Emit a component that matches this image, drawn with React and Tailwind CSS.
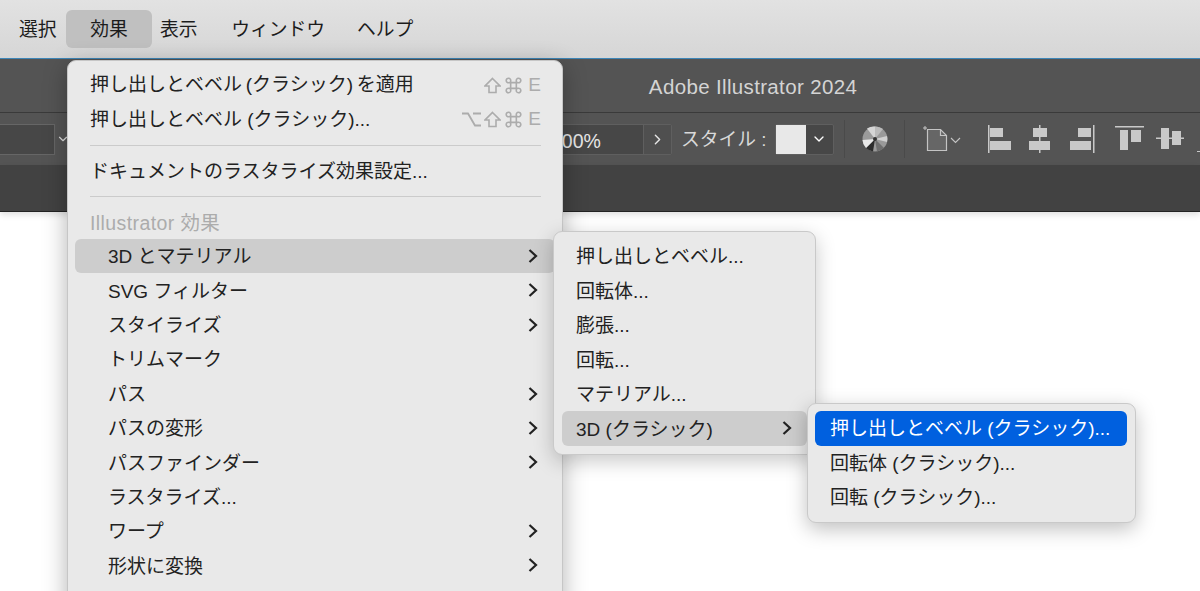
import { ChevronDown, ChevronRight } from "lucide-react";

const font = "font-['Liberation_Sans','Noto_Sans_CJK_JP',sans-serif]";

function Arrow({ className = "" }) {
  return (
    <svg width="10" height="16" viewBox="0 0 10 16" fill="none" className={className}>
      <path d="M1.5 2 L8 8 L1.5 14" stroke="#222" strokeWidth="2.2" />
    </svg>
  );
}

function ShiftKey() {
  return (
    <svg width="17" height="17" viewBox="0 0 17 17" fill="none" stroke="#acacac" strokeWidth="1.6">
      <path d="M8.5 1.5 L16 9 H12 V15.5 H5 V9 H1 Z" />
    </svg>
  );
}

function CmdKey() {
  return (
    <svg width="17" height="17" viewBox="0 0 15 15" fill="none" stroke="#acacac" strokeWidth="1.4">
      <path d="M5 5 H10 V10 H5 Z M5 5 V3.5 A2 2 0 1 0 3.5 5 H5 M10 5 V3.5 A2 2 0 1 1 11.5 5 H10 M5 10 V11.5 A2 2 0 1 1 3.5 10 H5 M10 10 V11.5 A2 2 0 1 0 11.5 10 H10" />
    </svg>
  );
}

function OptKey() {
  return (
    <svg width="19" height="17" viewBox="0 0 19 17" fill="none" stroke="#acacac" strokeWidth="1.8">
      <path d="M0 2.5 H6 L13 14.5 H19 M11 2.5 H19" />
    </svg>
  );
}

function Shortcut({ option }) {
  return (
    <div className="ml-auto mr-[14px] flex items-center text-[#acacac]">
      {option && <OptKey />}
      <span className={option ? "ml-[3px]" : ""}>
        <ShiftKey />
      </span>
      <span className="ml-[4px]">
        <CmdKey />
      </span>
      <span className="ml-[6px]">E</span>
    </div>
  );
}

function Row({ label, arrow, active, children, textClass = "pt-[3px]" }) {
  return (
    <div className={`flex h-[34.4px] shrink-0 items-center rounded-[6px] ${active ? "bg-[#cdcdcd]" : ""}`}>
      <span className={`whitespace-nowrap ${textClass}`}>{label}</span>
      {children}
      {arrow && <Arrow className="ml-auto mr-[17px]" />}
    </div>
  );
}

function Separator() {
  return <div className="my-[7.8px] ml-[15px] mr-[14px] h-px bg-[#cbcbcb]" />;
}

const mainItems = [
  ["3D とマテリアル", true, true],
  ["SVG フィルター", true],
  ["スタイライズ", true],
  ["トリムマーク"],
  ["パス", true],
  ["パスの変形", true],
  ["パスファインダー", true],
  ["ラスタライズ...", false],
  ["ワープ", true],
  ["形状に変換", true],
];

function MainMenu() {
  return (
    <div className="absolute left-[67px] top-[60px] w-[496px] h-[560px] rounded-[9px] border border-[#c6c6c6] bg-[#e9e9e9] pt-[7px] px-[7px] text-[19px] text-[#222] shadow-[0_6px_24px_rgba(0,0,0,0.3)]">
      <div className="[&>div]:pl-[15px]">
        <Row label="押し出しとベベル (クラシック) を適用" textClass="pt-px [word-spacing:-1.5px]">
          <Shortcut />
        </Row>
        <Row label="押し出しとベベル (クラシック)..." textClass="pt-px">
          <Shortcut option />
        </Row>
      </div>
      <Separator />
      <div className="pl-[15px]">
        <Row label="ドキュメントのラスタライズ効果設定..." textClass="pt-[3px]" />
      </div>
      <Separator />
      <div className="flex h-[34.4px] items-center whitespace-nowrap pl-[15px] pt-[4px] text-[19.5px] tracking-[0.4px] text-[#acacac]">Illustrator 効果</div>
      <div className="[&>div]:pl-[33px]">
        {mainItems.map(([label, arrow, active]) => (
          <Row key={label} label={label} arrow={arrow} active={active} />
        ))}
      </div>
    </div>
  );
}

function SubMenu() {
  return (
    <div className="absolute left-[553px] top-[231px] w-[263px] h-[224px] rounded-[9px] border border-[#c9c9c9] bg-[#e9e9e9] pt-[7px] px-[8px] text-[19px] text-[#222] shadow-[0_6px_20px_rgba(0,0,0,0.22)] [&>div]:pl-[14px]">
      <Row label="押し出しとベベル..." />
      <Row label="回転体..." />
      <Row label="膨張..." />
      <Row label="回転..." />
      <Row label="マテリアル..." />
      <div className="flex h-[35px] items-center rounded-[6px] bg-[#cdcdcd]">
        <span className="pt-[3px]">3D (クラシック)</span>
        <Arrow className="ml-auto mr-[15px]" />
      </div>
    </div>
  );
}

function ClassicMenu() {
  return (
    <div className="absolute left-[807px] top-[403px] w-[329px] h-[120px] rounded-[9px] border border-[#c9c9c9] bg-[#e9e9e9] pt-[7px] px-[7px] text-[19px] text-[#222] shadow-[0_6px_20px_rgba(0,0,0,0.25)] [&>div]:pl-[15px]">
      <div className="mr-[1px] flex h-[35px] items-center whitespace-nowrap rounded-[6px] bg-[#0060df] pt-[2px] text-white">押し出しとベベル (クラシック)...</div>
      <Row label="回転体 (クラシック)..." textClass="pt-[2px]" />
      <Row label="回転 (クラシック)..." textClass="pt-[2px]" />
    </div>
  );
}

function DiscIcon() {
  return (
    <svg width="26" height="26" viewBox="0 0 26 26" className="ml-[17px] shrink-0">
      <circle cx="13" cy="13" r="12.5" fill="#9a9a9a" />
      <path d="M13 13 L5 2.5 A12.5 12.5 0 0 1 13 .5 Z" fill="#d5d5d5" />
      <path d="M13 13 L13 .5 A12.5 12.5 0 0 1 21 3 Z" fill="#bbb" />
      <path d="M13 13 L25 10 A12.5 12.5 0 0 1 25 16 Z" fill="#d0d0d0" />
      <path d="M13 13 L22 22 A12.5 12.5 0 0 1 15 25.4 Z" fill="#6f6f6f" />
      <path d="M13 13 L11 25.4 A12.5 12.5 0 0 1 4 22 Z" fill="#2c2c2c" />
      <path d="M13 13 L4 22 A12.5 12.5 0 0 1 .5 14 Z" fill="#e8e8e8" />
      <circle cx="13" cy="13" r="2" fill="#333" />
    </svg>
  );
}

function DocIcon() {
  return (
    <svg width="38" height="28" viewBox="0 0 38 28" fill="none" className="ml-[18px] shrink-0">
      <path d="M2 1v4M0 3h4" stroke="#c4c4c4" strokeWidth="1" />
      <path d="M4.5 4.5h13l6 6v15h-19z" fill="#666" stroke="#c4c4c4" strokeWidth="1.2" />
      <path d="M17.5 4.5v6h6" stroke="#c4c4c4" strokeWidth="1.2" />
      <path d="M28 13l4.5 4.5 4.5-4.5" stroke="#c4c4c4" strokeWidth="1.1" />
    </svg>
  );
}

function AlignIcons() {
  const bar = "#c9c9c9";
  return (
    <svg width="212" height="34" viewBox="0 0 212 34" className="ml-[27px] shrink-0">
      <rect x="0" y="3" width="1.5" height="28" fill={bar} />
      <rect x="2" y="6" width="13" height="9" fill={bar} />
      <rect x="2" y="19" width="21" height="9" fill={bar} />
      <rect x="51" y="3" width="1.5" height="28" fill={bar} />
      <rect x="45" y="6" width="14" height="9" fill={bar} />
      <rect x="41" y="19" width="21" height="9" fill={bar} />
      <rect x="105" y="3" width="1.5" height="28" fill={bar} />
      <rect x="90" y="6" width="13" height="9" fill={bar} />
      <rect x="82" y="19" width="21" height="9" fill={bar} />
      <rect x="127" y="4" width="29" height="1.5" fill={bar} />
      <rect x="132" y="8" width="8" height="20" fill={bar} />
      <rect x="143" y="8" width="10" height="12" fill={bar} />
      <rect x="168" y="15.5" width="28" height="1.5" fill={bar} />
      <rect x="173" y="6" width="8" height="21" fill={bar} />
      <rect x="184" y="9" width="9" height="14" fill={bar} />
      <rect x="209" y="29" width="3" height="1" fill={bar} />
    </svg>
  );
}

function Toolbar() {
  return (
    <div className="flex h-[53px] items-center overflow-hidden border-t border-[#3a3a3a] bg-[#545454]">
      <div className="h-[31px] w-[55px] shrink-0 border-y border-r border-[#666] bg-[#474747]" />
      <ChevronDown size={14} className="ml-[1px] shrink-0 text-[#ddd]" />
      <div className="ml-[430px] flex h-[31px] w-[172px] shrink-0 items-center justify-between rounded-[2px] border border-[#5f5f5f] bg-[#474747] pl-[50px] text-[#e6e6e6]">
        <span className="pt-[5px] text-[19.5px] leading-none">100%</span>
        <div className="flex h-full w-[28px] items-center justify-center border-l border-[#5f5f5f] bg-[#4f4f4f]">
          <ChevronRight size={17} />
        </div>
      </div>
      <span className="ml-[9px] w-[94px] shrink-0 whitespace-nowrap pt-[3px] text-[18.8px] text-[#d9d9d9]">スタイル :</span>
      <div className="flex h-[31px] w-[59px] shrink-0 items-center rounded-[2px] border border-[#5f5f5f] bg-[#474747]">
        <div className="h-full w-[30px] bg-[#e8e8e8]" />
        <ChevronDown size={16} className="ml-[5px] text-white" />
      </div>
      <div className="ml-[10px] h-[38px] w-px shrink-0 bg-[#4a4a4a]" />
      <DiscIcon />
      <div className="ml-[16px] h-[38px] w-px shrink-0 bg-[#4a4a4a]" />
      <DocIcon />
      <AlignIcons />
    </div>
  );
}

export default function App() {
  return (
    <div className={`relative h-[591px] w-[1200px] overflow-hidden bg-white ${font}`}>
      <div className="flex h-[59px] items-center border-b border-[#3d86b8] bg-gradient-to-b from-[#e2e2e2] to-[#d6d6d6] pt-[3px] text-[18.8px] text-[#1c1c1c]">
        <span className="ml-[19px]">選択</span>
        <div className="mb-[4px] ml-[9.5px] flex h-[38px] w-[86px] items-center justify-center rounded-[6px] bg-[#c0c0c0] pt-[3px]">効果</div>
        <span className="ml-[8px]">表示</span>
        <span className="ml-[33.5px]">ウィンドウ</span>
        <span className="ml-[32px]">ヘルプ</span>
      </div>

      <div className="flex h-[53px] items-center justify-center bg-[#545454] pl-[306px] pt-[3px] text-[20.5px] tracking-[0.35px] text-[#d4d4d4]">
        Adobe Illustrator 2024
      </div>
      <Toolbar />
      <div className="h-[47px] border-b border-[#222] bg-[#424242] shadow-[0_3px_6px_rgba(0,0,0,0.12)]" />

      <MainMenu />
      <SubMenu />
      <ClassicMenu />
    </div>
  );
}
